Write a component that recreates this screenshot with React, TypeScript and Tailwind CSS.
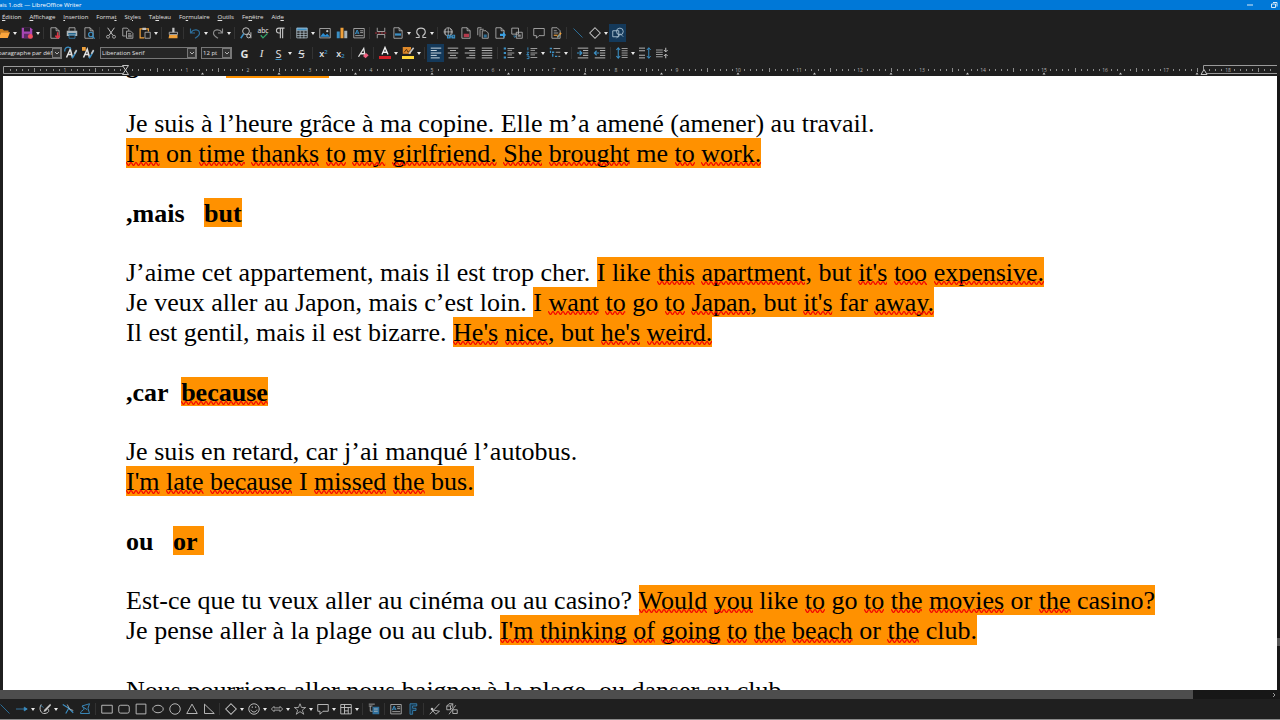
import { Fragment, type ReactNode } from "react";

const G = "#c4c4c4";
const B = "#3b8fc4";
const O = "#f0a13a";
const R = "#dc3545";

const icons: Record<string, ReactNode> = {
  open: (
    <>
      <path d="M0 2.500h6l2 2h6V7H4L1 14H0z" fill="#c97a1c" />
      <path d="M4 7h12l-3 7.500H1z" fill="#fba53c" />
    </>
  ),
  save: (
    <>
      <path d="M1 1h12l2 2v12H1z" fill="#a646b4" />
      <path d="M4 1h8v5H4z" fill="#2a2030" />
      <path d="M4 9h8v6H4z" fill="#5d2a66" />
      <circle cx="12.500" cy="12.500" r="3.300" fill="#ef5060" />
    </>
  ),
  pdf: (
    <>
      <path d="M2.500 1h7l4 4v10h-11z M9.500 1v4h4" stroke={G} />
      <path d="M11.500 7v7 M8.500 11.500l3 3 3-3" stroke={R} strokeWidth="2" />
    </>
  ),
  print: (
    <>
      <path d="M4 5V1h8v4" stroke={G} />
      <path d="M1 5h14v7H1z" fill="#a9b4ba" />
      <path d="M3 8h10v2H3z" fill="#24688f" />
      <path d="M4 11h8v4H4z" fill="#1f1f1f" stroke={B} />
    </>
  ),
  preview: (
    <>
      <path d="M2.500 1h7l4 4v10h-11z M9.500 1v4h4" stroke={G} />
      <circle cx="10.500" cy="10" r="3" stroke={B} strokeWidth="1.600" />
      <path d="M12.500 12.500l3 3" stroke={B} strokeWidth="1.800" />
    </>
  ),
  cut: (
    <>
      <path d="M3.500 1l7 10 M12.500 1l-7 10" stroke={G} strokeWidth="1.300" />
      <circle cx="4" cy="13" r="2" stroke={G} />
      <circle cx="12" cy="13" r="2" stroke={G} />
    </>
  ),
  copy: <path d="M5 12H1V1.500h6l2 2V5 M6 5.500h5.500l3 3v6.500H6z M8 9h4 M8 11h5 M8 13h5" stroke={G} />,
  paste: (
    <>
      <path d="M7 14.500H1.500v-12h11V6" stroke={O} strokeWidth="1.600" />
      <path d="M4.500 1h5v3h-5z" fill={G} />
      <path d="M8 7h7v8H8z" stroke={G} />
    </>
  ),
  clone: (
    <>
      <path d="M7 1h3v6H7z" fill={G} />
      <path d="M3 7h11v3H3z" stroke={G} />
      <path d="M3 10.500h11V15H2z" fill={O} />
    </>
  ),
  undo: <path d="M2 2v6h6 M2.500 7.500C6 2 14 3 14 8.500c0 3-3 4.500-6 6.500" stroke="#2f6f9b" strokeWidth="1.500" />,
  redo: <path d="M14 2v6H8 M13.500 7.500C10 2 2 3 2 8.500c0 3 3 4.500 6 6.500" stroke="#8b8b8b" strokeWidth="1.500" />,
  find: (
    <>
      <circle cx="8" cy="5.500" r="4.500" stroke={G} strokeWidth="1.300" />
      <path d="M5 9l-4 6" stroke={B} strokeWidth="2" />
      <circle cx="11.500" cy="12" r="2.500" stroke={G} strokeWidth="1.300" />
      <path d="M14.500 7v8" stroke={G} strokeWidth="1.300" />
    </>
  ),
  spell: (
    <>
      <text x="8" y="8" textAnchor="middle" fontSize="9" fill="#f0f0f0">abc</text>
      <path d="M5 11l3 3.500 6-6" stroke="#35a56b" strokeWidth="1.800" />
    </>
  ),
  pilcrow: <path d="M14 1.500H6.500a3 3 0 000 6.500H8 M8.500 1.500V15 M11.500 1.500V15" stroke={G} strokeWidth="1.500" />,
  table: (
    <>
      <path d="M1 1h14v3.500H1z" fill={B} />
      <path d="M1 1.500h14v13H1z M1 5h14 M1 8.300h14 M1 11.500h14 M5.500 5v10 M10.500 5v10" stroke="#b9cbd6" />
    </>
  ),
  image: (
    <>
      <path d="M1 2h14v12.500H1z" stroke={G} />
      <path d="M1.500 13l4-5 3 3 2.500-2 3.500 4z" fill="#2d8fd5" />
      <circle cx="11" cy="5.500" r="1.500" fill={G} />
    </>
  ),
  chart: (
    <>
      <path d="M1 6h4v9H1z" fill={B} />
      <path d="M6 1h4v14H6z" fill={O} />
      <path d="M11 5h4v10h-4z" fill="#a9b4ba" />
    </>
  ),
  textbox: (
    <>
      <path d="M1 2h14v12.500H1z M9.500 5h4 M9.500 7.500h4 M3 11.500h10.500" stroke={G} />
      <path d="M3 9.500l2.500-5.500 2.500 5.500 M4 8h3" stroke={B} strokeWidth="1.300" />
    </>
  ),
  pagebreak: (
    <>
      <path d="M3 1v5h10V1 M3 15v-5h10v5" stroke={G} />
      <path d="M0 8h16" stroke={R} strokeDasharray="3 1" />
    </>
  ),
  field: (
    <>
      <path d="M2.500 1h7l4 4v10h-11z M9.500 1v4h4" stroke={G} />
      <path d="M4 8.500h8v3H4z" fill={B} />
    </>
  ),
  omega: <path d="M1 14h4.500v-2.500C0 8 2 1.500 8 1.500s8 6.500 2.500 10V14H15" stroke={G} strokeWidth="1.400" />,
  link: (
    <>
      <circle cx="7" cy="6.500" r="5.500" stroke={G} />
      <path d="M1.500 6.500h11 M7 1v11 M4 2.500c-1.500 3-1.500 5 0 8 M10 2.500c1.500 3 1.500 5 0 8" stroke={G} />
      <path d="M6 11h3.500v3.500H6z M12 11h3.500v3.500H12z M8 13h6" stroke={B} strokeWidth="1.400" />
    </>
  ),
  footnote: (
    <>
      <path d="M2.500 1h7l4 4v10h-11z M9.500 1v4h4" stroke={G} />
      <path d="M5 9h7v4.500H5z" fill="#b43a4c" />
    </>
  ),
  endnote: (
    <>
      <path d="M1 11V1h5 M4 13V3h5" stroke={G} />
      <path d="M7 5h5l3 3v7H7z" stroke={G} />
      <path d="M9 10h4v4H9z" fill="#2e6f97" />
    </>
  ),
  bookmark: (
    <>
      <path d="M2.500 1h7l4 4v10h-11z M9.500 1v4h4" stroke={G} />
      <path d="M8 9h4V6l4 4.500-4 4.500v-3H8z" fill="#3aa0e4" />
    </>
  ),
  crossref: (
    <>
      <path d="M1 1.500h9v8H1z M7 7h8v8H7z" stroke={G} />
      <path d="M3 12h3 M4 14l3-2" stroke={B} />
      <path d="M9 10h4v3H9z" fill="#8c8c8c" />
    </>
  ),
  comment: <path d="M1 2h14v9.500H8L4.500 15v-3.500H1z" stroke={G} />,
  track: (
    <>
      <path d="M2.500 1h7l4 4v10h-11z M5 5h4 M5 8h6" stroke={G} />
      <path d="M5 11h5" stroke={O} strokeWidth="1.500" />
      <path d="M9 13l5-6 1.500 1.500-5 6z" fill={O} />
      <path d="M10 14l3-4" stroke={B} strokeWidth="1.500" />
    </>
  ),
  line: <path d="M2 2l12 12" stroke="#2d76a5" strokeWidth="1.200" />,
  diamond: <path d="M8 1L15 8 8 15 1 8z" stroke={G} strokeWidth="1.400" />,
  shapes: (
    <>
      <path d="M1 5h8v8H1z" stroke="#a9c2d2" strokeWidth="1.200" />
      <circle cx="10.500" cy="6" r="4.500" stroke="#a9c2d2" strokeWidth="1.200" />
      <path d="M6 15l5-6 4 4" stroke="#a9c2d2" />
    </>
  ),
  styleUpdate: (
    <>
      <path d="M2 14L7 3l3 11 M4 10h5" stroke="#e2e2e2" strokeWidth="2" />
      <path d="M0 6a4 4 0 018-3" stroke={B} strokeWidth="1.600" />
      <path d="M15.500 5l-4 7-2 3" stroke={B} strokeWidth="2" />
      <path d="M15.500 4l-3 5" stroke={G} strokeWidth="2" />
    </>
  ),
  styleNew: (
    <>
      <path d="M2 14L7 3l3 11 M4 10h5" stroke="#e2e2e2" strokeWidth="2" />
      <path d="M0 0h5v5H0z" fill={O} />
      <path d="M15.500 5l-4 7-2 3" stroke={B} strokeWidth="2" />
      <path d="M15.500 4l-3 5" stroke={G} strokeWidth="2" />
    </>
  ),
  clear: (
    <>
      <path d="M2 13L9 2l2 11 M5 9h5" stroke="#e2e2e2" strokeWidth="1.700" />
      <path d="M8 12l4-4 3.500 3-4 4z" fill="#f06080" />
    </>
  ),
  fontColor: (
    <>
      <path d="M4 10L8 0.500 12 10 M5.500 7h5" stroke="#f2f2f2" strokeWidth="1.800" />
      <path d="M0 12h16v4H0z" fill="#d42027" />
    </>
  ),
  highlight: (
    <>
      <path d="M1 0h11v9H1z" fill="#e08a2a" />
      <path d="M3 7l3-4 2 4 6-5" stroke="#553311" strokeWidth="1.300" />
      <path d="M15.500 1l-6 8" stroke={G} strokeWidth="2" />
      <path d="M0 12h16v4H0z" fill="#ffd83b" />
    </>
  ),
  left: <path d="M1 1.500h14 M1 4.700h8 M1 8h14 M1 11.200h8 M1 14.500h12" stroke="#dbe6ee" strokeWidth="1.200" />,
  center: <path d="M1 1.500h14 M4 4.700h8 M1 8h14 M4 11.200h8 M2 14.500h12" stroke={G} strokeWidth="1.200" />,
  right: <path d="M1 1.500h14 M7 4.700h8 M1 8h14 M7 11.200h8 M3 14.500h12" stroke={G} strokeWidth="1.200" />,
  justify: <path d="M1 1.500h14 M1 4.700h14 M1 8h14 M1 11.200h14 M1 14.500h14" stroke={G} strokeWidth="1.200" />,
  bullets: (
    <>
      <path d="M1 2h3 M1 8h3 M1 14h3" stroke={B} strokeWidth="2.500" />
      <path d="M6 2h9 M6 4.500h6 M6 8h9 M6 10.500h6 M6 14h9" stroke={G} />
    </>
  ),
  numbers: (
    <>
      <path d="M2.500 0.500v4 M1 7h3l-3 3h3 M1 12h3v3.500H1" stroke={B} strokeWidth="1.200" />
      <path d="M6 2h9 M6 4.500h6 M6 8h9 M6 10.500h6 M6 14h9" stroke={G} />
    </>
  ),
  outline: (
    <>
      <path d="M1 2h3 M4 7h3 M8 12.500h3 M2 5v3 M5 9v4" stroke={B} strokeWidth="1.700" />
      <path d="M6 2h9 M9 7h6 M12.500 12.500H15" stroke={G} />
    </>
  ),
  indent: (
    <>
      <path d="M1 1.500h14 M8 4.700h7 M8 8h7 M8 11.200h7 M1 14.500h14" stroke={G} strokeWidth="1.200" />
      <path d="M0 8h6 M3.500 5L6.500 8l-3 3" stroke={B} strokeWidth="1.500" />
    </>
  ),
  outdent: (
    <>
      <path d="M1 1.500h14 M8 4.700h7 M8 8h7 M8 11.200h7 M1 14.500h14" stroke={G} strokeWidth="1.200" />
      <path d="M1 8h6 M3.500 5L0.500 8l3 3" stroke={B} strokeWidth="1.500" />
    </>
  ),
  spacing: (
    <>
      <path d="M3 1v14 M0.500 4L3 1l2.500 3 M0.500 12L3 15l2.500-3" stroke={B} strokeWidth="1.400" />
      <path d="M7.500 2h8 M7.500 5h8 M7.500 8h8 M7.500 11h8 M7.500 14h8" stroke={G} />
    </>
  ),
  paraMore: (
    <>
      <path d="M0 1.500h8 M0 5h8 M0 11h8 M0 14.500h8" stroke={G} strokeWidth="1.200" />
      <path d="M13 1v14 M10.500 4L13 1l2.500 3 M10.500 12L13 15l2.500-3" stroke={B} strokeWidth="1.300" />
    </>
  ),
  paraLess: (
    <>
      <path d="M0 4h9 M0 7h9 M0 10h9 M0 13h9" stroke={G} />
      <path d="M13 1v5 M10.500 4L13 6.500 15.500 4 M13 15v-5 M10.500 12L13 9.500l2.500 2.500" stroke={G} strokeWidth="1.300" />
    </>
  ),
  arrowLine: <path d="M0 8h14 M11 5.500l4 2.500-4 2.500z" stroke={B} fill={B} />,
  pencil: (
    <>
      <path d="M3 2C-1 8 3 15 8 14s6-3 4-6" stroke={G} strokeWidth="1.300" />
      <path d="M15 1L7 9l-1 3 3-1 7-8z" fill={G} />
      <path d="M2 3l4 3" stroke={B} />
    </>
  ),
  connector: (
    <>
      <path d="M1 2l8 5 6 6 M9 7L5 14" stroke={B} strokeWidth="1.500" />
      <path d="M7 2l3 6 5 2" stroke={G} />
    </>
  ),
  polygon: <path d="M4 4l10-3-2 6 2 7H2c0-4 3-3 5-6z M5 5l6 4" stroke={B} strokeWidth="1.200" />,
  rect: <path d="M1 3h14v10.500H1z" stroke={G} strokeWidth="1.200" />,
  roundRect: <rect x="1" y="3" width="14" height="10.500" rx="2.500" stroke={G} strokeWidth="1.200" />,
  square: <path d="M1.500 1.500h13v13h-13z" stroke={G} strokeWidth="1.200" />,
  ellipse: <ellipse cx="8" cy="8" rx="7" ry="5" stroke={G} strokeWidth="1.200" />,
  circle: <circle cx="8" cy="8" r="7" stroke={G} strokeWidth="1.200" />,
  triangle: <path d="M8 1.500L15 14H1z" stroke={G} strokeWidth="1.200" />,
  rightTriangle: <path d="M2 1.500L15 14H2z" stroke={G} strokeWidth="1.200" />,
  smile: (
    <>
      <circle cx="8" cy="8" r="7" stroke={G} strokeWidth="1.200" />
      <path d="M4 9c1 4 7 4 8 0" stroke={G} strokeWidth="1.200" />
      <path d="M5 5.500h1.500 M9.500 5.500H11" stroke={G} strokeWidth="1.800" />
    </>
  ),
  doubleArrow: <path d="M0.500 8L4 4.500v2h8v-2L15.500 8 12 11.500v-2H4v2z" stroke={G} />,
  star: <path d="M8 1l2 5h5.500L11 9.500l2 5.500-5-3.500L3 15l2-5.500L0.500 6H6z" stroke={G} />,
  callout: <path d="M1 2h14v9H8l-4 4v-4H1z" stroke={G} strokeWidth="1.200" />,
  flow: <path d="M1 2h14v12.500H1z M1 6h14 M6 2v12.500 M6 10.500h5 M11 6v8.500" stroke={G} strokeWidth="1.200" />,
  anchorText: (
    <>
      <path d="M1 1.500h8 M1 4h5 M3 4v7h4" stroke={G} />
      <path d="M6 5h9v10H6z" fill="#2f6f9b" />
      <path d="M8 8h5 M8 11h5" stroke={G} />
    </>
  ),
  fontwork: <path d="M4 15V1h9v3H7.500v3H12v3H7.500v5z" fill="#17354a" stroke={B} />,
  points: (
    <>
      <path d="M1 15L14 1 M4 9l10 2-5 4z" stroke={G} strokeWidth="1.100" />
      <path d="M2.500 6.500h3v3h-3z" fill={G} />
    </>
  ),
  extrusion: <path d="M1 4l3-3h5v5L6 9H1z M1 4h5v5 M6 4l3-3 M4 15L13 3 M9 9h6v5H9z" stroke={G} strokeWidth="1.100" />,
};

type Item = { icon?: string; text?: ReactNode; label: string; menu?: boolean; sep?: boolean; on?: boolean };

const standard: Item[] = [
  { icon: "open", label: "Ouvrir", menu: true },
  { icon: "save", label: "Enregistrer", menu: true, sep: true },
  { icon: "pdf", label: "Exporter au format PDF" },
  { icon: "print", label: "Imprimer" },
  { icon: "preview", label: "Aperçu", sep: true },
  { icon: "cut", label: "Couper" },
  { icon: "copy", label: "Copier" },
  { icon: "paste", label: "Coller", menu: true, sep: true },
  { icon: "clone", label: "Cloner le formatage", sep: true },
  { icon: "undo", label: "Annuler", menu: true },
  { icon: "redo", label: "Rétablir", menu: true, sep: true },
  { icon: "find", label: "Rechercher et remplacer" },
  { icon: "spell", label: "Orthographe" },
  { icon: "pilcrow", label: "Marques de formatage", sep: true },
  { icon: "table", label: "Insérer un tableau", menu: true },
  { icon: "image", label: "Insérer une image" },
  { icon: "chart", label: "Insérer un diagramme" },
  { icon: "textbox", label: "Insérer une zone de texte", sep: true },
  { icon: "pagebreak", label: "Saut de page" },
  { icon: "field", label: "Insérer un champ", menu: true },
  { icon: "omega", label: "Caractère spécial", menu: true, sep: true },
  { icon: "link", label: "Hyperlien" },
  { icon: "footnote", label: "Note de bas de page" },
  { icon: "endnote", label: "Note de fin" },
  { icon: "bookmark", label: "Repère de texte" },
  { icon: "crossref", label: "Renvoi", sep: true },
  { icon: "comment", label: "Commentaire" },
  { icon: "track", label: "Suivi des modifications", sep: true },
  { icon: "line", label: "Ligne" },
  { icon: "diamond", label: "Formes de base", menu: true },
  { icon: "shapes", label: "Fonctions de dessin", on: true },
];

const formatting: Item[] = [
  { text: <b>G</b>, label: "Gras" },
  { text: <i className="font-['Liberation_Serif',serif]">I</i>, label: "Italique" },
  { text: <span className="underline decoration-[#3b8fc4]">S</span>, label: "Souligner", menu: true },
  { text: <s>S</s>, label: "Barrer", sep: true },
  { text: <span className="text-[9px] font-semibold">x<sup className="text-[6px] text-[#3b8fc4]">2</sup></span>, label: "Exposant" },
  { text: <span className="text-[9px] font-semibold">x<sub className="text-[6px] text-[#3b8fc4]">2</sub></span>, label: "Indice", sep: true },
  { icon: "clear", label: "Effacer le formatage", sep: true },
  { icon: "fontColor", label: "Couleur de police", menu: true },
  { icon: "highlight", label: "Couleur de surlignage", menu: true, sep: true },
  { icon: "left", label: "Aligner à gauche", on: true },
  { icon: "center", label: "Centrer" },
  { icon: "right", label: "Aligner à droite" },
  { icon: "justify", label: "Justifier", sep: true },
  { icon: "bullets", label: "Puces", menu: true },
  { icon: "numbers", label: "Numérotation", menu: true },
  { icon: "outline", label: "Format de plan", menu: true, sep: true },
  { icon: "indent", label: "Augmenter le retrait" },
  { icon: "outdent", label: "Diminuer le retrait", sep: true },
  { icon: "spacing", label: "Interligne", menu: true },
  { icon: "paraMore", label: "Augmenter l’espacement" },
  { icon: "paraLess", label: "Diminuer l’espacement" },
];

const drawing: Item[] = [
  { icon: "line", label: "Ligne" },
  { icon: "arrowLine", label: "Lignes et flèches", menu: true },
  { icon: "pencil", label: "Courbes et polygones", menu: true },
  { icon: "connector", label: "Connecteurs" },
  { icon: "polygon", label: "Polygone", sep: true },
  { icon: "rect", label: "Rectangle" },
  { icon: "roundRect", label: "Rectangle arrondi" },
  { icon: "square", label: "Carré" },
  { icon: "ellipse", label: "Ellipse" },
  { icon: "circle", label: "Cercle" },
  { icon: "triangle", label: "Triangle isocèle" },
  { icon: "rightTriangle", label: "Triangle rectangle", sep: true },
  { icon: "diamond", label: "Formes de base", menu: true },
  { icon: "smile", label: "Formes des symboles", menu: true },
  { icon: "doubleArrow", label: "Flèches pleines", menu: true },
  { icon: "star", label: "Étoiles", menu: true },
  { icon: "callout", label: "Légendes", menu: true },
  { icon: "flow", label: "Organigrammes", menu: true, sep: true },
  { icon: "anchorText", label: "Légende", sep: true },
  { icon: "textbox", label: "Zone de texte" },
  { icon: "fontwork", label: "Fontwork", sep: true },
  { icon: "points", label: "Points" },
  { icon: "extrusion", label: "Extrusion" },
];

function Toolbar({ items, label }: { items: Item[]; label: string }) {
  return (
    <div role="toolbar" aria-label={label} className="flex items-center">
      {items.map((item) => (
        <Fragment key={item.label}>
          <button
            type="button"
            aria-label={item.label}
            className={
              item.on
                ? "flex h-[18px] w-[17px] shrink-0 items-center justify-center bg-[#14395a]"
                : "flex h-[18px] w-[17px] shrink-0 items-center justify-center text-[11px] leading-none text-[#e2e2e2]"
            }
          >
            {item.icon ? (
              <svg viewBox="0 0 16 16" fill="none" className="size-3 overflow-visible">
                {icons[item.icon]}
              </svg>
            ) : (
              item.text
            )}
          </button>
          {item.menu && (
            <button type="button" aria-label={`${item.label} : options`} className="flex h-[18px] w-1.5 shrink-0 items-center justify-center">
              <svg viewBox="0 0 4 3" className="h-[3px] w-1">
                <path d="M0 0h4L2 3z" fill="#e8e8e8" />
              </svg>
            </button>
          )}
          {item.sep && (
            <span className="flex w-[5px] shrink-0 justify-center">
              <span className="h-3 w-px bg-[#333333]" />
            </span>
          )}
        </Fragment>
      ))}
    </div>
  );
}

function Combo({ label, value, className }: { label: string; value: string; className: string }) {
  return (
    <div className={className}>
      <input aria-label={label} defaultValue={value} className="min-w-0 flex-1 bg-transparent pl-px text-[6px] text-[#e0e0e0] outline-none" />
      <button type="button" aria-label={`${label} : liste`} className="flex w-[9px] shrink-0 items-center justify-center border border-[#777777] bg-[#333333]">
        <svg viewBox="0 0 6 4" fill="none" className="h-1 w-1.5">
          <path d="M1 1l2 2 2-2" stroke="#b5b5b5" />
        </svg>
      </button>
    </div>
  );
}

const menus: [string, string, string][] = [
  ["", "É", "dition"],
  ["", "A", "ffichage"],
  ["", "I", "nsertion"],
  ["Forma", "t", ""],
  ["St", "y", "les"],
  ["Ta", "b", "leau"],
  ["Fo", "r", "mulaire"],
  ["", "O", "utils"],
  ["Fe", "n", "être"],
  ["Aid", "e", ""],
];

const CM = 61.2;
const ORIGIN = 126;
const RIGHT_MARGIN = 1203;

function Ruler() {
  const ticks = Array.from({ length: 208 }, (_, i) => i - 20);
  const tabs = Array.from({ length: 14 }, (_, i) => ORIGIN + (i + 1) * 76.5);
  return (
    <svg className="h-[11px] w-full shrink-0 bg-[#1f1f1f]" fill="none" aria-label="Règle">
      <path d={`M${ORIGIN} 1.500H3.500v7H${ORIGIN}`} stroke="#9a9a9a" />
      <path d={`M1277 .5H${RIGHT_MARGIN + 0.5}v8H1277`} stroke="#9a9a9a" />
      {ticks.map((i) => {
        const x = Math.round(ORIGIN + (i * CM) / 10);
        if (i === 0 || i === -20) {
          return null;
        }
        if (i % 10 === 0) {
          return (
            <text key={i} x={x} y="7" fontSize="5" fill="#b5b5b5" textAnchor="middle">
              {Math.abs(i / 10)}
            </text>
          );
        }
        return <path key={i} d={i % 5 === 0 ? `M${x + 0.5} 3v4` : `M${x + 0.5} 4v2`} stroke="#8c8c8c" />;
      })}
      {tabs.map((x) => (
        <path key={x} d={`M${x - 1.5} 9.500h3L${x} 7.500z`} fill="#cccccc" />
      ))}
      <path d="M122.500 .5h6l-6 9h6z" fill="#1f1f1f" stroke="#c4c4c4" />
      <path d={`M${RIGHT_MARGIN - 2} 9.500h6l-3-5z`} fill="#1f1f1f" stroke="#c4c4c4" />
    </svg>
  );
}

function Misspelled({ children }: { children: ReactNode }) {
  return (
    <span className="relative">
      {children}
      <svg className="absolute bottom-[2px] left-0 h-1 w-full" aria-hidden="true">
        <rect width="100%" height="4" fill="url(#squiggle)" />
      </svg>
    </span>
  );
}

// Words between underscores carry the spell-check mark.
function Marked({ text }: { text: string }) {
  return (
    <mark className="inline-block h-full bg-[#ff9100] text-black">
      {text.split("_").map((part, i) => (i % 2 ? <Misspelled key={i}>{part}</Misspelled> : part))}
    </mark>
  );
}

type Line = { heading?: boolean; fr?: string; en?: string };

const lines: Line[] = [
  { heading: true, fr: "grâce à   ", en: "thanks to" },
  {},
  { fr: "Je suis à l’heure grâce à ma copine. Elle m’a amené (amener) au travail." },
  { en: "_I'm_ on _time_ _thanks_ _to_ _my_ _girlfriend._ _She_ _brought_ me _to_ _work._" },
  {},
  { heading: true, fr: ",mais   ", en: "but" },
  {},
  { fr: "J’aime cet appartement, mais il est trop cher. ", en: "I like _this_ _apartment_, but _it's_ _too_ _expensive._" },
  { fr: "Je veux aller au Japon, mais c’est loin. ", en: "I _want_ _to_ go _to_ _Japan_, but _it's_ far _away._" },
  { fr: "Il est gentil, mais il est bizarre. ", en: "_He's_ _nice_, but _he's_ _weird._" },
  {},
  { heading: true, fr: ",car  ", en: "_because_" },
  {},
  { fr: "Je suis en retard, car j’ai manqué l’autobus." },
  { en: "_I'm_ _late_ _because_ I _missed_ _the_ bus." },
  {},
  { heading: true, fr: "ou   ", en: "or " },
  {},
  {
    fr: "Est-ce que tu veux aller au cinéma ou au casino? ",
    en: "_Would_ _you_ like _to_ go _to_ _the_ _movies_ or _the_ casino?",
  },
  { fr: "Je pense aller à la plage ou au club. ", en: "_I'm_ _thinking_ _of_ _going_ _to_ _the_ _beach_ or _the_ club." },
  {},
  { fr: "Nous pourrions aller nous baigner à la plage, ou danser au club." },
];

export default function App() {
  return (
    <div className="flex h-screen flex-col overflow-hidden bg-[#1f1f1f] font-['Open_Sans',sans-serif] text-[#e0e0e0]">
      <header className="flex h-2.5 shrink-0 items-center justify-between bg-[#0078d7] text-white">
        <h1 className="-ml-px text-[6px] leading-none">ais 1.odt — LibreOffice Writer</h1>
        <div className="flex items-center gap-4 pr-0.5">
          <button type="button" aria-label="Réduire">
            <svg viewBox="0 0 8 8" className="size-2">
              <path d="M1 4h6" stroke="#d6e9f8" />
            </svg>
          </button>
          <button type="button" aria-label="Niveau inférieur">
            <svg viewBox="0 0 8 8" fill="none" className="size-2">
              <path d="M3 1.500h4v4 M1.500 3h4v3.500h-4z" stroke="#d6e9f8" />
            </svg>
          </button>
        </div>
      </header>

      <nav className="flex h-[13px] shrink-0 items-center gap-2 pl-0.5 text-[6px] leading-none">
        {menus.map(([before, key, after]) => (
          <button type="button" key={before + key + after}>
            {before}
            <u>{key}</u>
            {after}
          </button>
        ))}
      </nav>

      <div className="-ml-[5px] flex h-5 shrink-0 items-center">
        <Toolbar items={standard} label="Standard" />
      </div>
      <div className="flex h-[22px] shrink-0 items-center pb-0.5">
        <Combo
          label="Style de paragraphe"
          value="paragraphe par défaut"
          className="-ml-1 flex h-3 w-[66px] shrink-0 border border-[#777777] bg-[#262626]"
        />
        <Toolbar
          label="Styles"
          items={[
            { icon: "styleUpdate", label: "Actualiser le style" },
            { icon: "styleNew", label: "Nouveau style" },
          ]}
        />
        <Combo label="Police" value="Liberation Serif" className="ml-1 flex h-3 w-[97px] shrink-0 border border-[#777777] bg-[#262626]" />
        <Combo label="Taille" value="12 pt" className="mr-1 ml-1 flex h-3 w-[31px] shrink-0 border border-[#777777] bg-[#262626]" />
        <Toolbar items={formatting} label="Formatage" />
      </div>

      <Ruler />

      <div className="flex min-h-0 flex-1 pl-[3px]">
        <svg className="absolute size-0" aria-hidden="true">
          <defs>
            <pattern id="squiggle" width="5" height="4" patternUnits="userSpaceOnUse">
              <path d="M-1.250 2Q0 -.8 1.250 2T3.750 2T6.250 2" fill="none" stroke="#f40800" strokeWidth="1.300" />
            </pattern>
          </defs>
        </svg>
        <main className="min-w-0 flex-1 overflow-hidden bg-white pl-[123px] font-['Liberation_Serif',serif] text-[26px] whitespace-pre text-black">
          <div className="-mt-[27px]">
            {lines.map((line, i) => (
              <p key={i} className={line.heading ? "h-[29px] leading-8 font-bold" : "h-[30px] leading-8"}>
                {line.fr}
                {line.en && <Marked text={line.en} />}
              </p>
            ))}
          </div>
        </main>
        <div className="flex w-[3px] shrink-0 flex-col justify-end bg-[#171717] pb-11">
          <div className="h-2 bg-[#555555]" />
        </div>
      </div>

      <div className="flex h-[9px] shrink-0 items-center bg-[#171717]">
        <div className="h-full w-[93.2%] bg-[#4d4d4d]" />
        <svg viewBox="0 0 4 6" fill="none" className="mr-1 ml-auto h-1.5 w-1">
          <path d="M1 1l2 2-2 2" stroke="#9a9a9a" />
        </svg>
      </div>

      <footer className="-ml-1 flex h-[21px] shrink-0 items-center border-b border-[#8a8a8a]">
        <Toolbar items={drawing} label="Dessin" />
      </footer>
    </div>
  );
}
